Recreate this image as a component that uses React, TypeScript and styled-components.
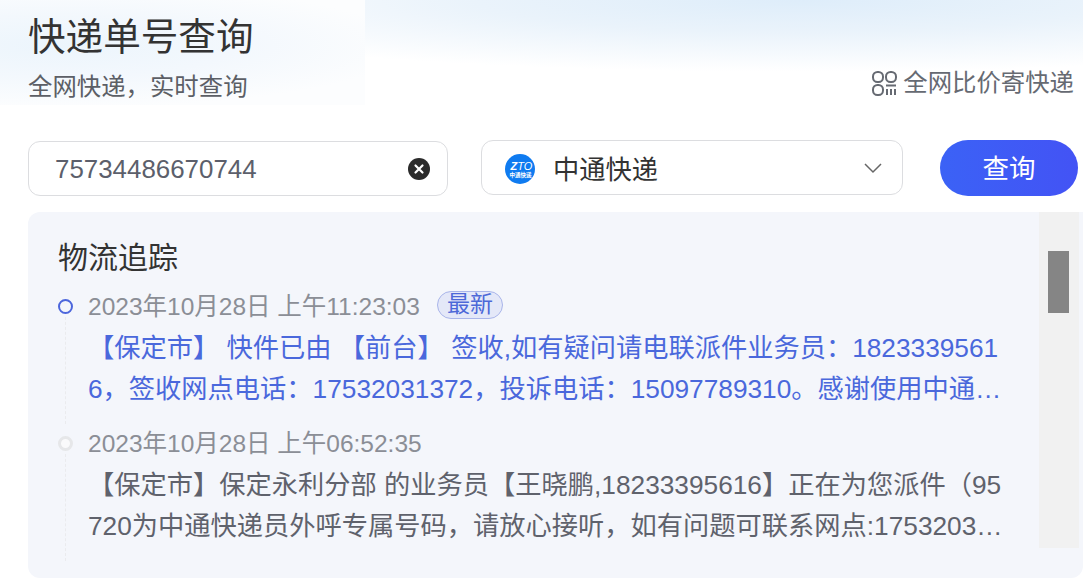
import styled, { createGlobalStyle } from "styled-components";

const GlobalStyle = createGlobalStyle`
  html, body {
    margin: 0;
    padding: 0;
    background: #fff;
  }
  body {
    font-family: "Liberation Sans", "Noto Sans CJK SC", sans-serif;
  }
`;

const Page = styled.div`
  width: 1083px;
  height: 578px;
  overflow: hidden;
  box-sizing: border-box;
  padding: 0 0 0 28px;
  background:
    radial-gradient(ellipse 350px 62px at 60px 46px, #ecf5fc 0%, #f3f8fd 50%, #fcfdfe 100%) 0 0 / 365px 105px no-repeat,
    radial-gradient(ellipse 720px 72px at 800px 0, #deedfa 0%, #eaf3fb 45%, #ffffff 100%) 0 0 / 100% 105px no-repeat;
`;

const Header = styled.header`
  display: flex;
  justify-content: space-between;
  align-items: flex-end;
  height: 140px;
  box-sizing: border-box;
  padding: 16px 9px 0 0;
`;

const HeaderText = styled.div`
  display: flex;
  flex-direction: column;
  height: 124px;
`;

const Title = styled.h1`
  margin: 0;
  font-size: 37.6px;
  line-height: 42px;
  font-weight: 400;
  color: #333;
`;

const Subtitle = styled.p`
  margin: 12px 0 0;
  font-size: 24.4px;
  line-height: 34px;
  color: #5c5f66;
`;

const CompareLink = styled.a`
  display: flex;
  align-items: center;
  gap: 5px;
  align-self: flex-start;
  margin-top: 50px;
  font-size: 24.4px;
  line-height: 34px;
  color: #666a72;
`;

const SearchRow = styled.div`
  display: flex;
  align-items: flex-start;
  height: 72px;
`;

const InputBox = styled.div`
  display: flex;
  align-items: center;
  justify-content: space-between;
  box-sizing: border-box;
  width: 420px;
  height: 55px;
  margin-top: 1px;
  padding: 0 17px 0 26px;
  border: 1px solid #dcdde0;
  border-radius: 12px;
  background: #fff;
  font-size: 25.9px;
  color: #5c5f6b;
`;

const InputValue = styled.span`
  padding-top: 2px;
`;

const ClearButton = styled.span`
  display: flex;
`;

const CarrierSelect = styled.div`
  display: flex;
  align-items: center;
  box-sizing: border-box;
  width: 422px;
  height: 55px;
  margin-left: 33px;
  padding: 0 19px 0 23px;
  border: 1px solid #dcdde0;
  border-radius: 12px;
  background: #fff;
  font-size: 26.25px;
  color: #333;
`;

const CarrierLogo = styled.span`
  display: flex;
  margin-top: 2px;
`;

const CarrierName = styled.span`
  flex: 1;
  margin-left: 18px;
`;

const SearchButton = styled.button`
  width: 138px;
  height: 56px;
  margin-left: 37px;
  padding: 0 0 3px;
  border: 0;
  border-radius: 28px;
  background: linear-gradient(90deg, #3b62f6, #4353f5);
  color: #fff;
  font-family: inherit;
  font-size: 26.5px;
`;

const Panel = styled.section`
  position: relative;
  width: 1055px;
  height: 366px;
  box-sizing: border-box;
  padding: 24px 84px 0 30px;
  border-radius: 12px 0 12px 12px;
  background: #f4f6fb;
`;

const ScrollTrack = styled.div`
  position: absolute;
  top: 0;
  right: 4px;
  width: 40px;
  height: 336px;
  background: #f1f1f1;
`;

const ScrollThumb = styled.div`
  width: 21px;
  height: 62px;
  margin: 39px 0 0 9px;
  background: #858585;
`;

const PanelTitle = styled.h2`
  margin: 0 0 7px;
  font-size: 30px;
  line-height: 44px;
  font-weight: 400;
  color: #333;
`;

const Event = styled.article`
  position: relative;
  padding-left: 30px;
  margin-bottom: 14px;

  &::before {
    content: "";
    position: absolute;
    left: 7px;
    top: 30px;
    bottom: -14px;
    border-left: 1px dashed #eaebee;
  }
`;

const Dot = styled.span<{ $active?: boolean }>`
  position: absolute;
  left: 0;
  top: 12px;
  box-sizing: border-box;
  width: 15px;
  height: 15px;
  border-radius: 50%;
  background: ${(p) => (p.$active ? "#f4f6fb" : "#fafafb")};
  border: ${(p) => (p.$active ? "2px solid #4c66dc" : "3px solid #e6e7e9")};
`;

const TimeRow = styled.div`
  display: flex;
  align-items: center;
  gap: 17px;
  height: 35px;
  margin-bottom: 6px;
  font-size: 24.5px;
  color: #8b8e96;
`;

const Badge = styled.span`
  box-sizing: border-box;
  height: 28px;
  padding: 0 9px;
  border: 1px solid #a9b5ea;
  border-radius: 14px;
  background: #e4e8f8;
  color: #4d68d8;
  font-size: 23px;
  line-height: 25px;
`;

const EventText = styled.p<{ $active?: boolean }>`
  margin: 0;
  width: 916px;
  font-size: 26.25px;
  line-height: 41px;
  color: ${(p) => (p.$active ? "#4a68dc" : "#5f626c")};
  word-break: break-all;
  display: -webkit-box;
  -webkit-box-orient: vertical;
  -webkit-line-clamp: 2;
  overflow: hidden;
`;

const ZtoLogo = () => (
  <svg width="30" height="30" viewBox="0 0 30 30">
    <circle cx="15" cy="15" r="15" fill="#0f7bf0" />
    <text x="5.500" y="15.500" fontSize="11" fontStyle="italic" fill="#fff" fontFamily="Liberation Sans">
      <tspan fontWeight="700">Z</tspan>
      <tspan>TO</tspan>
    </text>
    <text x="4.500" y="23" fontSize="5.500" fontWeight="700" fill="#fff" fontFamily="Noto Sans CJK SC">
      中通快递
    </text>
  </svg>
);

const QrIcon = () => (
  <svg width="27" height="27" viewBox="0 0 27 27" fill="none" stroke="#666a72" strokeWidth="2">
    <rect x="2" y="2" width="10" height="10" rx="4.500" />
    <rect x="15" y="2" width="10" height="10" rx="4.500" />
    <rect x="2" y="15" width="10" height="10" rx="4.500" />
    <path d="M15 15.500h10M16 19v6M20 19v6M24 19v6" />
  </svg>
);

const App = () => {
  return (
    <>
      <GlobalStyle />
      <Page>
        <Header>
          <HeaderText>
            <Title>快递单号查询</Title>
            <Subtitle>全网快递，实时查询</Subtitle>
          </HeaderText>
          <CompareLink>
            <QrIcon />
            全网比价寄快递
          </CompareLink>
        </Header>
        <SearchRow>
          <InputBox>
            <InputValue>75734486670744</InputValue>
            <ClearButton>
              <svg width="22" height="22" viewBox="0 0 22 22">
                <circle cx="11" cy="11" r="11" fill="#2b2b2b" />
                <path d="M7.500 7.500l7 7M14.500 7.500l-7 7" stroke="#fff" strokeWidth="2.200" strokeLinecap="round" />
              </svg>
            </ClearButton>
          </InputBox>
          <CarrierSelect>
            <CarrierLogo>
              <ZtoLogo />
            </CarrierLogo>
            <CarrierName>中通快递</CarrierName>
            <svg width="20" height="12" viewBox="0 0 20 12" fill="none" stroke="#666" strokeWidth="1.500">
              <path d="M2 2l8 8 8-8" />
            </svg>
          </CarrierSelect>
          <SearchButton>查询</SearchButton>
        </SearchRow>
        <Panel>
          <ScrollTrack>
            <ScrollThumb />
          </ScrollTrack>
          <PanelTitle>物流追踪</PanelTitle>
          <Event>
            <Dot $active />
            <TimeRow>
              2023年10月28日 上午11:23:03
              <Badge>最新</Badge>
            </TimeRow>
            <EventText $active>
              【保定市】 快件已由 【前台】 签收,如有疑问请电联派件业务员：18233395616，签收网点电话：17532031372，投诉电话：15097789310。感谢使用中通快递，期待再次为您服务！
            </EventText>
          </Event>
          <Event>
            <Dot />
            <TimeRow>2023年10月28日 上午06:52:35</TimeRow>
            <EventText>
              【保定市】保定永利分部 的业务员【王晓鹏,18233395616】正在为您派件（95720为中通快递员外呼专属号码，请放心接听，如有问题可联系网点:17532031372，投诉电话：15097789310）
            </EventText>
          </Event>
        </Panel>
      </Page>
    </>
  );
};

export default App;
